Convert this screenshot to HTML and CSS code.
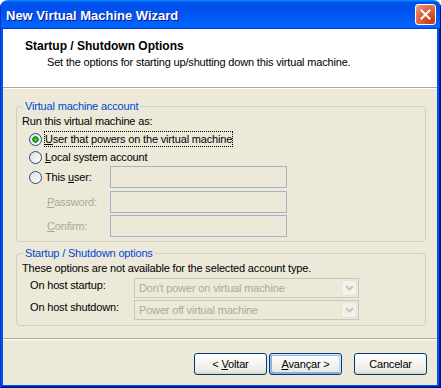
FILE: index.html
```html
<!DOCTYPE html>
<html lang="en">
<head>
  <meta charset="UTF-8" />
  <title>New Virtual Machine Wizard</title>
  <link rel="stylesheet" href="styles.css">
</head>
<body>
  <div class="window">
    <div class="titlebar">
      <span class="title-text">New Virtual Machine Wizard</span>
      <button class="close" aria-label="Close">
        <svg width="11" height="11" viewBox="0 0 11 11"><path d="M1.5 1.5 L9.5 9.5 M9.5 1.5 L1.5 9.5" stroke="#fff" stroke-width="2" stroke-linecap="square"/></svg>
      </button>
    </div>
    <div class="frame">
      <div class="dialog">
        <div class="header">
          <div class="header-title">Startup / Shutdown Options</div>
          <div class="header-sub">Set the options for starting up/shutting down this virtual machine.</div>
        </div>
        <div class="sep"></div>

        <div class="content">
          <fieldset class="group">
            <legend>Virtual machine account</legend>
            <div class="prompt">Run this virtual machine as:</div>
            <label class="opt opt-first">
              <input type="radio" name="acct" checked>
              <span class="lbl focus"><u>U</u>ser that powers on the virtual machine</span>
            </label>
            <label class="opt">
              <input type="radio" name="acct">
              <span class="lbl"><u>L</u>ocal system account</span>
            </label>
            <div class="field-row">
              <label class="opt">
                <input type="radio" name="acct">
                <span class="lbl">This <u>u</u>ser:</span>
              </label>
              <input type="text" class="field" disabled>
            </div>
            <div class="field-row row-pass">
              <span class="sublabel"><u>P</u>assword:</span>
              <input type="password" class="field" disabled>
            </div>
            <div class="field-row row-confirm">
              <span class="sublabel"><u>C</u>onfirm:</span>
              <input type="password" class="field" disabled>
            </div>
          </fieldset>

          <fieldset class="group group-startup">
            <legend>Startup / Shutdown options</legend>
            <div class="note">These options are not available for the selected account type.</div>
            <div class="combo-row combo-first">
              <span class="combo-label">On host startup:</span>
              <div class="combo">
                <span class="combo-value">Don't power on virtual machine</span>
                <span class="combo-drop"><svg width="9" height="6" viewBox="0 0 9 6"><path d="M1 1 L4.5 4.5 L8 1" fill="none" stroke="#c9c7ba" stroke-width="2"/></svg></span>
              </div>
            </div>
            <div class="combo-row">
              <span class="combo-label">On host shutdown:</span>
              <div class="combo">
                <span class="combo-value">Power off virtual machine</span>
                <span class="combo-drop"><svg width="9" height="6" viewBox="0 0 9 6"><path d="M1 1 L4.5 4.5 L8 1" fill="none" stroke="#c9c7ba" stroke-width="2"/></svg></span>
              </div>
            </div>
          </fieldset>
        </div>

        <div class="sep sep-bottom"></div>

        <div class="buttons">
          <button class="btn">&lt; <u>V</u>oltar</button>
          <button class="btn btn-default"><u>A</u>vançar &gt;</button>
          <button class="btn btn-cancel">Cancelar</button>
        </div>
      </div>
    </div>
  </div>
</body>
</html>
```

FILE: styles.css
```css
* {
  margin: 0;
  padding: 0;
  box-sizing: border-box;
}

body {
  background: #fff;
  font-family: 'Liberation Sans', Arial, sans-serif;
  font-size: 11px;
  letter-spacing: -0.17px;
  color: #000;
}

.window {
  width: 441px;
  height: 388px;
  display: flex;
  flex-direction: column;
  border-radius: 8px 8px 0 0;
  overflow: hidden;
}

/* title bar */
.titlebar {
  height: 29px;
  flex: none;
  display: flex;
  align-items: center;
  justify-content: space-between;
  padding: 0 5px 0 6px;
  background: linear-gradient(180deg, #0997ff, #0053ee 8%, #0050ee 40%, #0066ff 88%, #0066ff 93%, #005bff 95%, #003dd7 96%, #003dd7);
  box-shadow: inset 1px 0 #0831d9, inset -1px 0 #00138c;
}

.title-text {
  color: #fff;
  font-weight: bold;
  font-size: 13px;
  letter-spacing: 0;
  text-shadow: 1px 1px #0f1089;
  padding-top: 1px;
}

.close {
  width: 21px;
  height: 21px;
  border: 1px solid #fff;
  border-radius: 3px;
  background: radial-gradient(circle at 80% 85%, #c13c17, #e0633b 55%, #eb8d6c 85%, #f5b9a2);
  display: grid;
  place-items: center;
}

/* window frame */
.frame {
  flex: 1;
  display: flex;
  padding: 0 4px 3px 3px;
  background: #0055e5;
  box-shadow: inset 1px 0 #0831d9, inset -1px -1px #00138c, inset -2px -2px #001ea0;
}

.dialog {
  flex: 1;
  background: #ece9d8;
  display: flex;
  flex-direction: column;
}

.header {
  height: 58px;
  background: #fff;
  padding: 10px 0 0 22px;
}

.header-title {
  font-weight: bold;
  font-size: 12px;
  letter-spacing: 0;
  line-height: 14px;
}

.header-sub {
  line-height: 14px;
  margin: 2px 0 0 22px;
}

.sep {
  border-top: 1px solid #aca899;
  border-bottom: 1px solid #fff;
}

.sep-bottom {
  margin-top: 12px;
}

.content {
  padding: 10px 11px 0 13px;
}

/* group boxes */
.group {
  border: 1px solid #d0d0bf;
  border-radius: 4px;
  padding: 0 5px 4px;
  min-width: 0;
}

.group legend {
  color: #0046d5;
  line-height: 14px;
  padding: 0 2px;
  margin-left: 1px;
}

.group-startup {
  margin-top: 4px;
  padding-bottom: 5px;
}

.prompt,
.note {
  line-height: 14px;
  margin-top: 1px;
}

.opt {
  height: 18px;
  display: flex;
  align-items: center;
}

.opt-first {
  margin-top: 2px;
}

.opt input {
  -webkit-appearance: none;
  appearance: none;
  width: 13px;
  height: 13px;
  margin-left: 7px;
  border: 1px solid #1c5180;
  border-radius: 50%;
  background: linear-gradient(135deg, #dcdcd7, #fff);
}

.opt input:checked {
  background: radial-gradient(circle, #5ed65e 0, #21a121 2px, #1c8a1c 3px, transparent 3.5px),
    linear-gradient(135deg, #dcdcd7, #fff);
}

.lbl {
  margin-left: 2px;
  line-height: 14px;
  border: 1px solid transparent;
}

.lbl.focus {
  border: 1px dotted #000;
}

.field-row {
  display: grid;
  grid-template-columns: 88px 177px;
  align-items: center;
  height: 22px;
}

.row-pass {
  margin-top: 3px;
}

.row-confirm {
  margin-top: 2px;
}

.sublabel {
  padding-left: 25px;
  color: #aca899;
}

.field {
  width: 177px;
  height: 22px;
  border: 1px solid #a5b3c4;
  background: #ece9d8;
}

/* combos */
.combo-row {
  display: grid;
  grid-template-columns: 112px 225px;
  align-items: start;
  margin-top: 2px;
}

.combo-first {
  margin-top: 3px;
}

.combo-label {
  padding-left: 8px;
  line-height: 14px;
}

.combo {
  width: 225px;
  height: 20px;
  border: 1px solid #c9c7ba;
  background: #ece9d8;
  display: flex;
  align-items: center;
  justify-content: space-between;
  padding: 1px;
  color: #aca899;
}

.combo-value {
  padding-left: 3px;
}

.combo-drop {
  width: 16px;
  height: 16px;
  border: 1px solid #e4e2d6;
  border-radius: 2px;
  background: #f2f1ea;
  display: grid;
  place-items: center;
}

/* buttons */
.buttons {
  display: flex;
  justify-content: flex-end;
  gap: 2px;
  padding: 13px 10px 0 0;
}

.btn {
  width: 73px;
  height: 22px;
  font-family: inherit;
  font-size: 11px;
  letter-spacing: -0.17px;
  color: #000;
  border: 1px solid #003c74;
  border-radius: 3px;
  background: linear-gradient(180deg, #fff, #ecebe6 86%, #d6d0c5);
}

.btn-default {
  box-shadow: inset -1px 1px #cee7ff, inset 1px 2px #98b8ea, inset -2px 2px #bcd4f6, inset 1px -1px #89ade4, inset 2px -2px #89ade4;
}

.btn-cancel {
  margin-left: 10px;
}
```
